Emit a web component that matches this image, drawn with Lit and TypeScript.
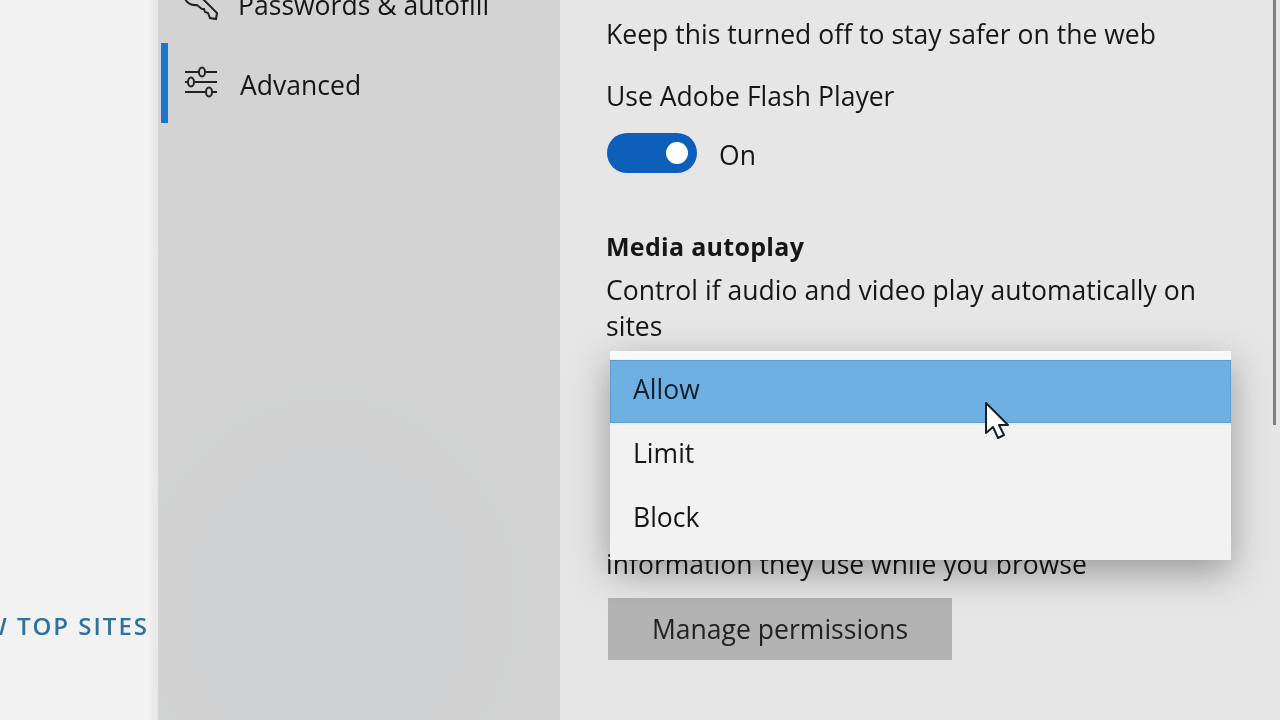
import { LitElement, html, css } from "lit";
import { customElement } from "lit/decorators.js";

@customElement("app-root")
export class AppRoot extends LitElement {
  static styles = css`
    :host {
      display: flex;
      position: relative;
      width: 1280px;
      height: 720px;
      overflow: hidden;
      font-family: "Open Sans", "Noto Sans", sans-serif;
      font-size: 26.5px;
      letter-spacing: 0.03px;
      line-height: 36px;
      color: #161616;
      background: #e6e6e6;
      filter: blur(0.5px);
    }
    .left {
      width: 158px;
      flex: none;
      background: linear-gradient(to right, #f2f2f2 0, #f2f2f2 148px, #e6e6e6 158px);
      display: flex;
      justify-content: flex-end;
      align-items: flex-end;
      padding: 0 10px 76px 0;
      box-sizing: border-box;
      overflow: hidden;
      white-space: nowrap;
    }
    .top-sites {
      font-size: 24px;
      font-weight: 600;
      letter-spacing: 2px;
      margin-right: -1px;
      color: #2f709f;
      flex: none;
    }
    .side {
      width: 402px;
      flex: none;
      background: radial-gradient(ellipse 220px 240px at 170px 640px, #cfd1d3 0%, #d3d3d3 100%), #d3d3d3;
      display: flex;
      flex-direction: column;
      margin-top: -37px;
      height: 757px;
      box-sizing: border-box;
    }
    .nav {
      height: 80px;
      display: flex;
      align-items: center;
      position: relative;
      padding-left: 26px;
      gap: 22px;
    }
    .nav span { padding-top: 4px; }
    .nav .pw { margin-left: -2px; }
    .nav svg {
      flex: none;
      width: 34px;
      height: 34px;
      margin-bottom: 2px;
      fill: none;
      stroke: #222;
      stroke-width: 2;
      overflow: visible;
    }
    .nav.active::before {
      content: "";
      position: absolute;
      left: 3px;
      top: 0;
      bottom: 0;
      width: 7px;
      background: #1878d0;
    }
    .main {
      flex: 1;
      display: flex;
      flex-direction: column;
      align-items: flex-start;
      padding-left: 46px;
      margin-top: -28px;
    }
    .h {
      font-weight: 700;
      font-size: 25px;
      letter-spacing: 0.3px;
    }
    .g8 { margin-top: 8px; }
    .g26 { margin-top: 26px; }
    .g55 { margin-top: 55px; }
    .para { width: 610px; }
    .toggle-row {
      display: flex;
      align-items: center;
      gap: 22px;
      margin-top: 19px;
      margin-left: 1px;
    }
    .toggle-row span { padding-top: 4px; }
    .toggle {
      width: 90px;
      height: 40px;
      border-radius: 20px;
      background: #0e5fba;
      position: relative;
    }
    .knob {
      position: absolute;
      right: 9px;
      top: 9px;
      width: 22px;
      height: 22px;
      border-radius: 50%;
      background: #fff;
    }
    .hidden-text { margin-top: 202px; }
    .btn {
      margin-top: 16px;
      margin-left: 2px;
      width: 344px;
      height: 62px;
      background: #b3b3b3;
      display: flex;
      align-items: center;
      justify-content: center;
      color: #222;
    }
    .menu {
      position: absolute;
      left: 610px;
      top: 351px;
      width: 621px;
      box-sizing: border-box;
      padding: 9px 0 8px;
      background: #f2f2f2;
      box-shadow: 0 12px 36px rgba(0, 0, 0, 0.34);
    }
    .menu::before {
      content: "";
      position: absolute;
      left: 0;
      right: 0;
      top: 0;
      height: 8px;
      background: #f7f9fb;
    }
    .opt {
      height: 64px;
      box-sizing: border-box;
      display: flex;
      align-items: center;
      padding: 0 0 6px 23px;
    }
    .opt.sel {
      background: #6fb0e2;
      box-shadow: inset 0 0 0 1px #5f9ed3, 0 2px 0 #e3eff8;
      height: 63px;
      margin-bottom: 1px;
      color: #10202e;
    }
    .cursor {
      position: absolute;
      left: 984px;
      top: 401px;
      width: 26px;
      height: 40px;
    }
    .scroll {
      position: absolute;
      left: 1273px;
      top: 0;
      width: 3px;
      height: 425px;
      background: #808080;
    }
  `;

  render() {
    return html`
      <div class="left"><span class="top-sites">VIEW TOP SITES</span></div>
      <nav class="side">
        <div class="nav">
          <svg viewBox="0 0 34 34">
            <path d="M1 14Q5 21 13 20L18 24L20 24L21 27L24 28L26 33L32 34L33 28L19 14A11 11 0 1 0 1 14Z" />
            <circle cx="7" cy="5" r="1.5" />
          </svg>
          <span class="pw">Passwords &amp; autofill</span>
        </div>
        <div class="nav active">
          <svg viewBox="0 0 34 34">
            <path d="M1 7h14M21 7h12M1 17h3M10 17h23M1 27h21M28 27h5" />
            <ellipse cx="18" cy="7" rx="3" ry="4.5" />
            <ellipse cx="7" cy="17" rx="3" ry="4.5" />
            <ellipse cx="25" cy="27" rx="3" ry="4.5" />
          </svg>
          <span>Advanced</span>
        </div>
      </nav>
      <main class="main">
        <div class="h">Adobe Flash</div>
        <div class="g8">Keep this turned off to stay safer on the web</div>
        <div class="g26">Use Adobe Flash Player</div>
        <div class="toggle-row">
          <div class="toggle"><div class="knob"></div></div>
          <span>On</span>
        </div>
        <div class="h g55">Media autoplay</div>
        <div class="g8 para">Control if audio and video play automatically on sites</div>
        <div class="hidden-text">information they use while you browse</div>
        <div class="btn">Manage permissions</div>
      </main>
      <div class="scroll"></div>
      <div class="menu">
        <div class="opt sel">Allow</div>
        <div class="opt">Limit</div>
        <div class="opt">Block</div>
      </div>
      <svg class="cursor" viewBox="0 0 26 40">
        <path d="M2 2v30l7-6 5 11 6-3-5-10h9z" fill="#fff" stroke="#17202a" stroke-width="2" stroke-linejoin="round" />
      </svg>
    `;
  }
}
